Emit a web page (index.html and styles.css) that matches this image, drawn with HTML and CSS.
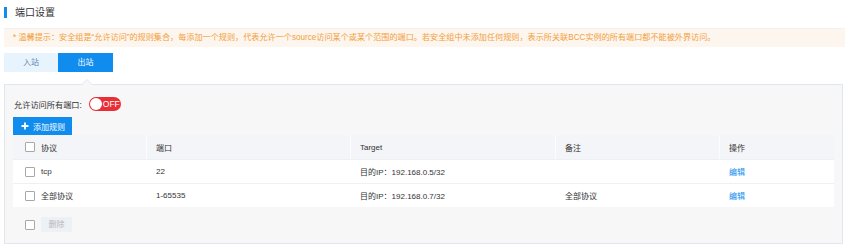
FILE: index.html
```html
<!DOCTYPE html>
<html lang="zh">
<head>
<meta charset="utf-8">
<title>端口设置</title>
<link rel="stylesheet" href="styles.css">
</head>
<body>
<div class="page">
  <div class="title"><span class="title-bar"></span><span class="title-text">端口设置</span></div>
  <div class="notice">* 温馨提示：安全组是“允许访问”的规则集合，每添加一个规则，代表允许一个source访问某个或某个范围的端口。若安全组中未添加任何规则，表示所关联BCC实例的所有端口都不能被外界访问。</div>
  <div class="tabs">
    <div class="tab">入站</div>
    <div class="tab active">出站</div>
  </div>
  <div class="panel">
    <div class="toggle-row">
      <span class="toggle-label">允许访问所有端口:</span>
      <span class="switch"><span class="knob"></span><span class="switch-text">OFF</span></span>
    </div>
    <div class="actions">
      <button class="add-btn"><svg class="plus" width="8" height="8" viewBox="0 0 8 8"><path d="M4 0.5V7.5M0.5 4H7.5" stroke="#fff" stroke-width="1.8"/></svg><span>添加规则</span></button>
    </div>
    <div class="grid">
      <div class="row head">
        <div class="cell c1"><span class="cb"></span><span>协议</span></div>
        <div class="cell">端口</div>
        <div class="cell">Target</div>
        <div class="cell">备注</div>
        <div class="cell">操作</div>
      </div>
      <div class="row">
        <div class="cell c1"><span class="cb"></span><span>tcp</span></div>
        <div class="cell">22</div>
        <div class="cell">目的IP：192.168.0.5/32</div>
        <div class="cell"></div>
        <div class="cell"><a class="link">编辑</a></div>
      </div>
      <div class="row">
        <div class="cell c1"><span class="cb"></span><span>全部协议</span></div>
        <div class="cell">1-65535</div>
        <div class="cell">目的IP：192.168.0.7/32</div>
        <div class="cell">全部协议</div>
        <div class="cell"><a class="link">编辑</a></div>
      </div>
    </div>
    <div class="footer">
      <span class="cb"></span>
      <span class="del-btn">删除</span>
    </div>
  </div>
</div>
</body>
</html>
```

FILE: styles.css
```css
* { box-sizing: border-box; }
html, body { margin: 0; padding: 0; background: #fff; }
body {
  font-family: "Liberation Sans", "Noto Sans CJK SC", sans-serif;
  font-size: 8px;
  color: #333;
}
.page { padding: 0 5px 0 4px; }

.title {
  height: 29px;
  display: flex;
  align-items: flex-start;
  padding-top: 7px;
  border-bottom: 1px solid #f2f2f2;
}
.title-bar { width: 3px; height: 11px; background: #108cee; }
.title-text {
  margin-left: 8px;
  font-size: 10px;
  line-height: 11px;
  color: #333;
}

.notice {
  height: 18px;
  line-height: 18px;
  background: #fdf6ee;
  color: #f3a03c;
  padding-left: 9px;
  font-size: 8.15px;
  white-space: nowrap;
  overflow: hidden;
}

.tabs { display: flex; margin-top: 6px; }
.tab {
  width: 54px;
  height: 19px;
  line-height: 19px;
  text-align: center;
  background: #e8f4fd;
  color: #5b87ad;
}
.tab.active { background: #108cee; color: #fff; width: 55px; }

.panel {
  position: relative;
  margin-top: 12px;
  margin-right: 2px;
  background: #f7f7f7;
  border: 1px solid #e1e7ee;
  padding: 12px 8px 11px 8px;
}
.panel::before {
  content: "";
  position: absolute;
  top: -6px;
  left: 76px;
  width: 0; height: 0;
  border-left: 6px solid transparent;
  border-right: 6px solid transparent;
  border-bottom: 6px solid #e1e7ee;
}
.panel::after {
  content: "";
  position: absolute;
  top: -5px;
  left: 77px;
  width: 0; height: 0;
  border-left: 5px solid transparent;
  border-right: 5px solid transparent;
  border-bottom: 5px solid #f7f7f7;
}

.toggle-row { display: flex; align-items: center; height: 14px; padding-left: 1px; }
.toggle-label { color: #333; font-size: 8.2px; }
.switch {
  position: relative;
  margin-left: 7px;
  width: 32px;
  height: 14px;
  border-radius: 7px;
  background: #ea2e36;
  display: flex;
  align-items: center;
}
.knob {
  width: 12px; height: 12px;
  border-radius: 50%;
  background: #fff;
  margin-left: 1px;
}
.switch-text { color: #fff; font-size: 8.5px; margin-left: 1px; }

.actions { margin-top: 6px; display: flex; }
.add-btn {
  height: 18px;
  width: 59px;
  border: 0;
  padding: 0 0 0 8px;
  background: #108cee;
  color: #fff;
  font: inherit;
  font-size: 8px;
  display: flex;
  align-items: center;
  gap: 4px;
}

.grid { width: 821px; }
.row {
  display: grid;
  grid-template-columns: 133px 204px 205px 164px 1fr;
  height: 24px;
  background: #fff;
  border-top: 1px solid #eef1f4;
}
.row.head { background: #f3f5f8; border-top: 0; }
.cell {
  display: flex;
  align-items: center;
  padding-left: 10px;
  color: #333;
  white-space: nowrap;
}
.row.head .cell + .cell { border-left: 1px solid #fbfcfd; padding-left: 9px; }
.cell.c1 { padding-left: 12px; gap: 6px; }
.cb {
  display: inline-block;
  width: 10px; height: 10px;
  border: 1px solid #a8a8a8;
  background: #fff;
  border-radius: 1px;
}
.link { color: #108cee; text-decoration: none; }

.footer {
  display: flex;
  align-items: center;
  margin-top: 10px;
  padding-left: 12px;
  gap: 6px;
}
.del-btn {
  width: 31px;
  height: 15px;
  line-height: 15px;
  text-align: center;
  background: #eef1f4;
  color: #b4b8bd;
}
```
